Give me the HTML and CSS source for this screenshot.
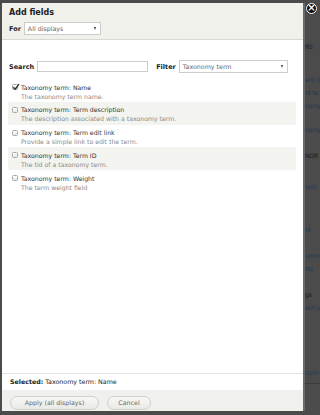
FILE: index.html
```html
<!DOCTYPE html>
<html lang="en">
<head>
	<meta charset="UTF-8">
	<title>Add fields</title>
	<link rel="stylesheet" href="styles.css">
</head>
<body>
	<div class="page">
		<div class="bg-line dark g1">RS</div>
		<div class="bg-line link g2">ent u</div>
		<div class="bg-line link g3">nt te</div>
		<div class="bg-line link g3">nomy</div>
		<div class="bg-line link g4">nomy</div>
		<div class="bg-line dark g5">NOR</div>
		<div class="bg-line link g6">lasic</div>
		<div class="bg-line link g7">nt</div>
		<div class="bg-line link g5">umm</div>
		<div class="bg-line link g3">No</div>
		<div class="bg-line dark g5">gs</div>
		<div class="bg-line link g3">ent u</div>
		<div class="bg-line link g8">cach</div>
		<div class="bg-rule"></div>
	</div>

	<div class="dialog">
		<a class="close" href="#">&times;</a>
		<div class="dialog-head">
			<h1>Add fields</h1>
			<div class="for-row">
				<label>For</label>
				<div class="select select-for">All displays<span class="arrow"></span></div>
			</div>
		</div>

		<div class="dialog-body">
			<div class="search-row">
				<label>Search</label>
				<div class="input"></div>
				<label class="filter-label">Filter</label>
				<div class="select select-filter">Taxonomy term<span class="arrow"></span></div>
			</div>

			<ul class="fields">
				<li>
					<span class="check checked">
						<svg viewBox="0 0 8 8" width="8" height="8"><path d="M1.2 4.2 L3.2 6.2 L7 1.2" fill="none" stroke="#333" stroke-width="1.4"/></svg>
					</span>
					<div class="field-text">
						<div class="field-title">Taxonomy term: Name</div>
						<div class="field-desc">The taxonomy term name.</div>
					</div>
				</li>
				<li class="odd">
					<span class="check"></span>
					<div class="field-text">
						<div class="field-title">Taxonomy term: Term description</div>
						<div class="field-desc">The description associated with a taxonomy term.</div>
					</div>
				</li>
				<li>
					<span class="check"></span>
					<div class="field-text">
						<div class="field-title">Taxonomy term: Term edit link</div>
						<div class="field-desc">Provide a simple link to edit the term.</div>
					</div>
				</li>
				<li class="odd">
					<span class="check"></span>
					<div class="field-text">
						<div class="field-title">Taxonomy term: Term ID</div>
						<div class="field-desc">The tid of a taxonomy term.</div>
					</div>
				</li>
				<li>
					<span class="check"></span>
					<div class="field-text">
						<div class="field-title">Taxonomy term: Weight</div>
						<div class="field-desc">The term weight field</div>
					</div>
				</li>
			</ul>
		</div>

		<div class="selected"><b>Selected:</b> Taxonomy term: Name</div>
		<div class="dialog-foot">
			<span class="btn btn-apply">Apply (all displays)</span>
			<span class="btn btn-cancel">Cancel</span>
		</div>
	</div>
</body>
</html>
```

FILE: styles.css
```css
*{
	margin: 0;
	padding: 0;
	box-sizing: border-box;
}
body{
	width: 320px;
	height: 415px;
	overflow: hidden;
	background-color: #4b4b4b;
	font-family: "DejaVu Sans", Verdana, sans-serif;
	position: relative;
}

/* page behind the overlay */
.page{
	padding-left: 305px;
	padding-top: 41px;
	font-size: 6.2px;
	line-height: 12px;
	letter-spacing: -0.3px;
	white-space: nowrap;
}
.bg-line.link{ color: #223b55; }
.bg-line.dark{ color: #1c1c1c; }
.g2{ margin-top: 21px; }
.g3{ margin-top: 1px; }
.g4{ margin-top: 12px; }
.g5{ margin-top: 14px; }
.g6{ margin-top: 19px; }
.g7{ margin-top: 31px; }
.g8{ margin-top: 53px; }
.bg-rule{
	margin-top: 4px;
	height: 1px;
	background-color: #3c3c3c;
}

/* dialog */
.dialog{
	position: absolute;
	left: 2px;
	top: 3px;
	width: 301px;
	height: 408px;
	background-color: #fff;
	display: flex;
	flex-direction: column;
	box-shadow: 2px 0 0 #6a6a6a;
	color: #333;
}
.close{
	position: absolute;
	left: 304px;
	top: 0;
	width: 11px;
	height: 11px;
	border-radius: 50%;
	background-color: #111;
	border: 1px solid #fff;
	color: #fff;
	font-size: 10px;
	line-height: 8px;
	font-weight: bold;
	text-align: center;
	text-decoration: none;
}
.dialog-head{
	height: 37px;
	background-color: #f1f1ec;
	border-bottom: 1px solid #d9d9d4;
	padding: 5px 7px 0;
}
.dialog-head h1{
	font-size: 8px;
	line-height: 10px;
	font-weight: bold;
	color: #222;
}
.for-row{
	display: flex;
	align-items: center;
	gap: 3px;
	margin-top: 4px;
}
label{
	font-size: 6.5px;
	font-weight: bold;
	color: #222;
}
.select{
	position: relative;
	height: 13px;
	border: 1px solid #ccc;
	background-color: #fff;
	font-size: 6.3px;
	line-height: 11px;
	color: #666;
	padding-left: 3px;
}
.select-for{ width: 77px; }
.select-filter{ width: 109px; }
.arrow{
	position: absolute;
	right: 4px;
	top: 4px;
	border-left: 1.5px solid transparent;
	border-right: 1.5px solid transparent;
	border-top: 3px solid #333;
}

.dialog-body{
	flex: 1;
	padding: 20px 7px 0 6px;
}
.search-row{
	display: flex;
	align-items: center;
	padding-left: 1px;
	height: 13px;
}
.input{
	width: 111px;
	height: 11px;
	border: 1px solid #ccc;
	margin-left: 3px;
}
.filter-label{
	margin-left: 8px;
	margin-right: 3px;
}
.fields{
	list-style: none;
	margin-top: 6px;
}
.fields li{
	display: flex;
	align-items: flex-start;
	height: 22.8px;
	padding-top: 3.5px;
}
.fields li.odd{
	background-color: #f3f3ef;
}
.check{
	width: 6px;
	height: 6px;
	margin: 1.5px 3px 0 4px;
	border: 1px solid #a8a8a8;
	border-radius: 1.5px;
	background: linear-gradient(#fff, #e6e6e6);
	position: relative;
	flex-shrink: 0;
}
.check svg{
	position: absolute;
	left: -1px;
	top: -2px;
}
.field-title{
	font-size: 6.2px;
	line-height: 9px;
	color: #333;
}
.field-desc{
	font-size: 6.2px;
	line-height: 9px;
	color: #8a8a8a;
}

.selected{
	height: 17px;
	border-top: 1px solid #e2e2de;
	padding-left: 8px;
	font-size: 6.3px;
	line-height: 16px;
	color: #222;
}
.dialog-foot{
	height: 21px;
	background-color: #f0f0ec;
	padding: 6px 0 0 8px;
	display: flex;
	gap: 8px;
}
.btn{
	height: 13.5px;
	border: 1px solid #cfcfcb;
	border-radius: 7px;
	background: linear-gradient(#f8f8f6, #e9e9e6);
	font-size: 6.3px;
	line-height: 11.5px;
	color: #6a6a6a;
	text-align: center;
}
.btn-apply{ width: 89px; }
.btn-cancel{ width: 44px; }
```
